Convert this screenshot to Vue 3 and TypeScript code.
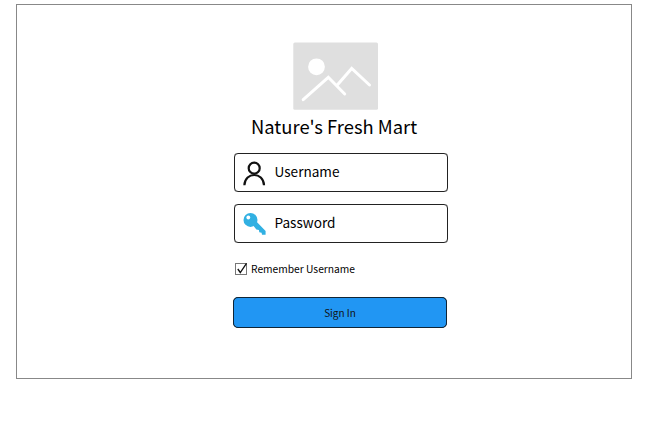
<script setup lang="ts">
import { ref } from 'vue'

const username = ref('')
const password = ref('')
const remember = ref(true)
</script>

<template>
  <main class="frame">
    <form class="login" @submit.prevent>
      <svg class="logo" viewBox="0 0 85 68" aria-hidden="true">
        <rect x="0.3" y="0.4" width="84.7" height="67.4" rx="1.5" fill="#dfdfdf" />
        <circle cx="23.5" cy="24.8" r="8.4" fill="#fff" />
        <path d="M10.2 57.7 L35.3 35.3 L51.7 52 M44.3 43 L58.7 26.5 L76.5 43" fill="none" stroke="#fff" stroke-width="3" stroke-linecap="round" stroke-linejoin="miter" />
      </svg>
      <h1 class="title">Nature's Fresh Mart</h1>
      <label class="field">
        <svg class="icon" viewBox="0 0 24 26" aria-hidden="true">
          <g fill="none" stroke="#111" stroke-width="2.2">
            <circle cx="11.2" cy="8.2" r="5.5" />
            <path d="M1.4 25.2 C2 11.6 20.4 11.6 21 25.2" />
          </g>
        </svg>
        <input v-model="username" type="text" placeholder="Username" />
      </label>
      <label class="field">
        <svg class="icon" viewBox="0 0 24 26" aria-hidden="true">
          <path d="M10 14.2 L13.6 10.8 L22.6 20 L22.6 23.8 L19 23.8 L18.6 21.7 L16.3 21.3 L15.9 18.9 L13.4 18.4 Z" fill="#31b0e2" />
          <circle cx="7.5" cy="8.9" r="7" fill="#31b0e2" />
          <circle cx="5.3" cy="6.5" r="1.9" fill="#fff" />
        </svg>
        <input v-model="password" type="password" placeholder="Password" />
      </label>
      <label class="remember">
        <input v-model="remember" class="native" type="checkbox" />
        <svg class="check" viewBox="0 0 14 14" aria-hidden="true">
          <rect x="1.5" y="1.5" width="11" height="11" fill="#fff" stroke="#777" />
          <path v-if="remember" d="M3.8 7 L6.3 10.5 L12.5 1.3" fill="none" stroke="#111" stroke-width="1.3" />
        </svg>
        <span class="caption">Remember Username</span>
      </label>
      <button class="submit" type="submit">Sign In</button>
    </form>
  </main>
</template>

<style>
body {
  background: #fff;
}
</style>

<style scoped>
.frame {
  box-sizing: border-box;
  width: 616px;
  height: 375px;
  margin: 4px 0 0 16px;
  border: 1px solid #888;
  font-family: "Noto Sans CJK SC", "Noto Sans", sans-serif;
  color: #000;
  display: flow-root;
}
.login {
  width: 214px;
  margin: 37px 0 0 217px;
  display: flex;
  flex-direction: column;
}
.logo {
  width: 85px;
  height: 68px;
  margin-left: 59px;
}
.title {
  margin: 1px 0 0 17px;
  height: 30px;
  line-height: 31px;
  font-size: 18.4px;
  font-weight: 400;
  white-space: nowrap;
}
.field {
  box-sizing: border-box;
  height: 39px;
  margin-top: 12px;
  border: 1px solid #222;
  border-radius: 4px;
  box-shadow: 0 0 0.5px #222;
  display: flex;
  align-items: center;
  padding-left: 8px;
  gap: 7.5px;
}
.icon {
  width: 24px;
  height: 26px;
  flex: none;
}
.field input {
  width: 150px;
  height: 24px;
  padding: 0 0 3px;
  box-sizing: border-box;
  border: 0;
  outline: 0;
  background: none;
  font: 13.6px/21px "Noto Sans CJK SC", "Noto Sans", sans-serif;
  color: #000;
}
.field input::placeholder {
  color: #000;
  opacity: 1;
}
.remember {
  height: 18px;
  margin-top: 17px;
  display: flex;
  align-items: center;
  gap: 3px;
  font-size: 10.25px;
  line-height: 18px;
  white-space: nowrap;
}
.native {
  appearance: none;
  width: 0;
  height: 0;
  margin: 0 -3px 0 0;
}
.check {
  width: 14px;
  height: 14px;
}
.submit {
  box-sizing: border-box;
  width: 214px;
  height: 31px;
  margin: 19px 0 0 -1px;
  padding: 1px 0 0;
  border: 1px solid #102536;
  border-radius: 5px;
  box-shadow: 0 0 0.5px #102536;
  background: #2196f3;
  color: #111;
  font: 10px/18px "Noto Sans CJK SC", "Noto Sans", sans-serif;
}
</style>
